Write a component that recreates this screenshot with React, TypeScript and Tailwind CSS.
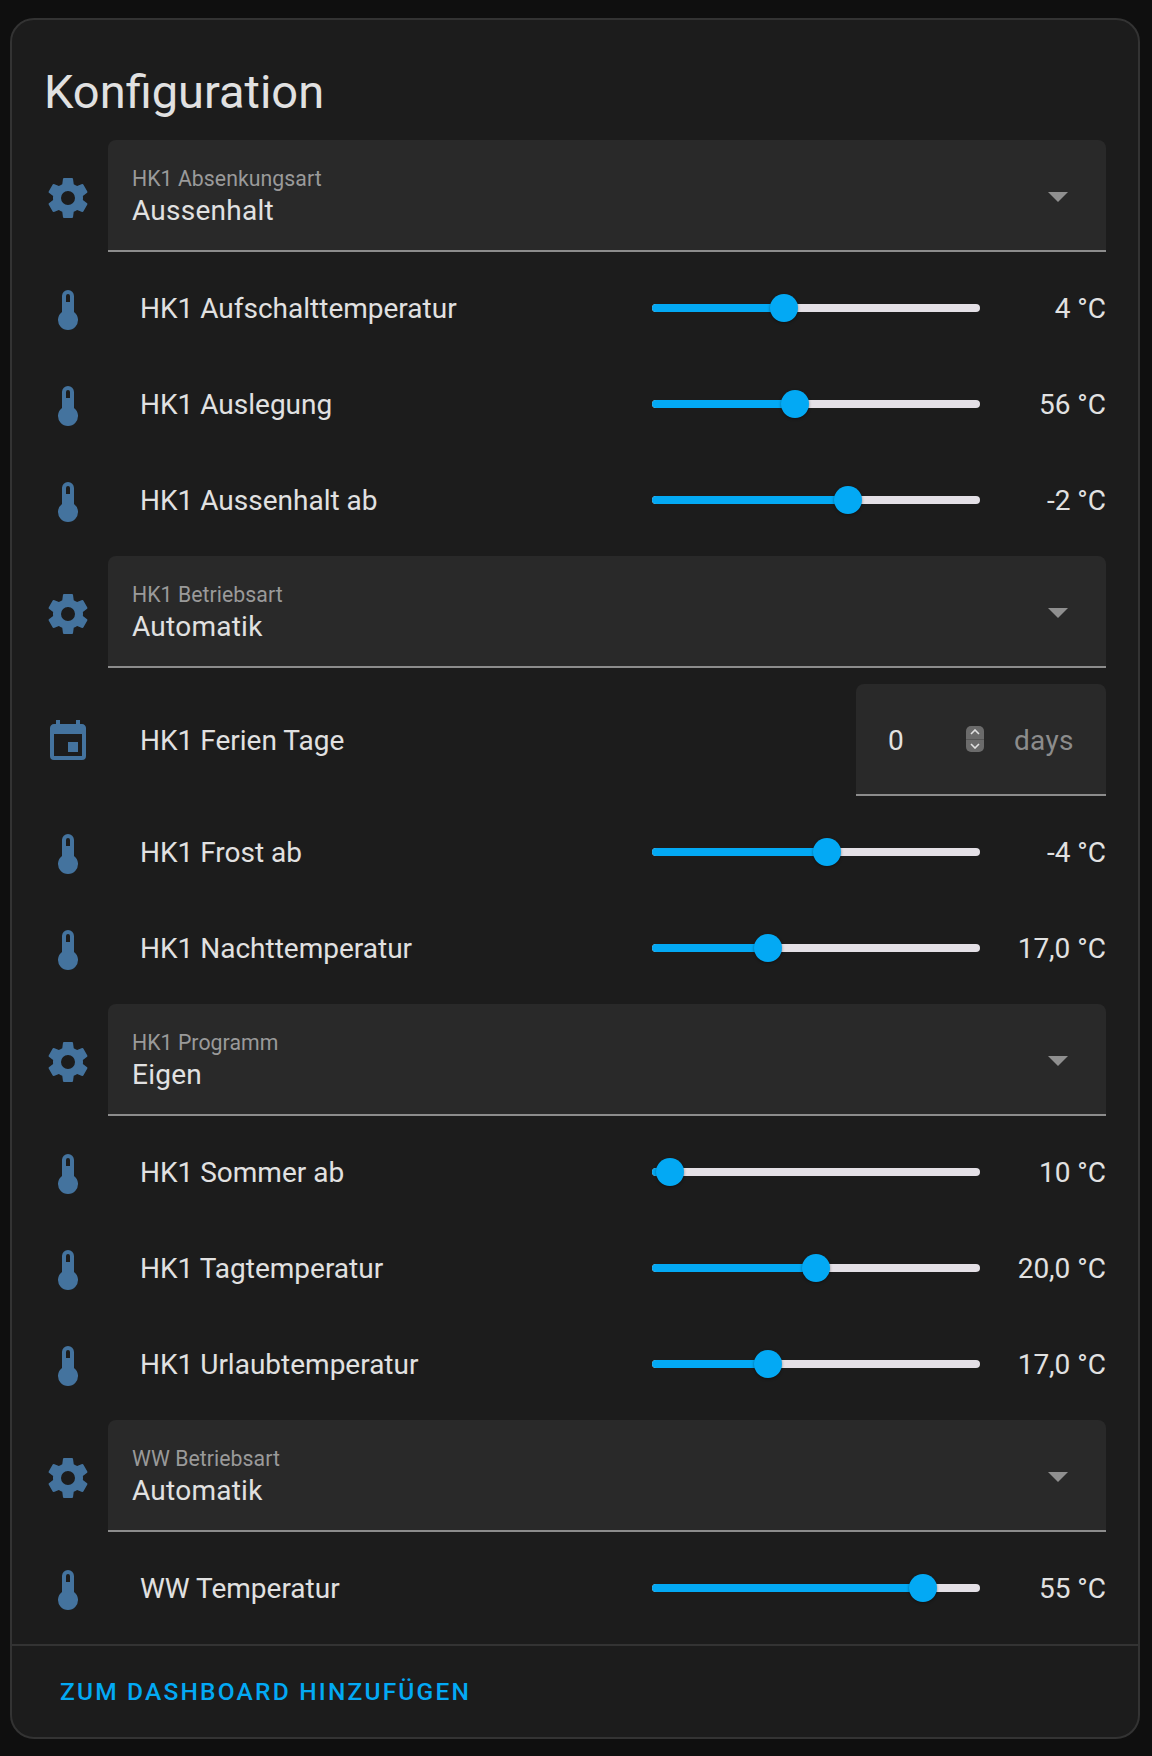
const cog =
  "M12,15.5A3.5,3.5 0 0,1 8.5,12A3.5,3.5 0 0,1 12,8.5A3.5,3.5 0 0,1 15.5,12A3.5,3.5 0 0,1 12,15.5M19.43,12.97C19.47,12.65 19.5,12.33 19.5,12C19.5,11.67 19.47,11.34 19.43,11L21.54,9.37C21.73,9.22 21.78,8.95 21.66,8.73L19.66,5.27C19.54,5.05 19.27,4.96 19.05,5.05L16.56,6.05C16.04,5.66 15.5,5.32 14.87,5.07L14.5,2.42C14.46,2.18 14.25,2 14,2H10C9.75,2 9.54,2.18 9.5,2.42L9.13,5.07C8.5,5.32 7.96,5.66 7.44,6.05L4.95,5.05C4.73,4.96 4.46,5.05 4.34,5.27L2.34,8.73C2.21,8.95 2.27,9.22 2.46,9.37L4.57,11C4.53,11.34 4.5,11.67 4.5,12C4.5,12.33 4.53,12.65 4.57,12.97L2.46,14.63C2.27,14.78 2.21,15.05 2.34,15.27L4.34,18.73C4.46,18.95 4.73,19.03 4.95,18.95L7.44,17.94C7.96,18.34 8.5,18.68 9.13,18.93L9.5,21.58C9.54,21.82 9.75,22 10,22H14C14.25,22 14.46,21.82 14.5,21.58L14.87,18.93C15.5,18.67 16.04,18.34 16.56,17.94L19.05,18.95C19.27,19.03 19.54,18.95 19.66,18.73L21.66,15.27C21.78,15.05 21.73,14.78 21.54,14.63L19.43,12.97Z";
const thermometer = "M15 13V5A3 3 0 0 0 9 5V13A5 5 0 1 0 15 13M12 4A1 1 0 0 1 13 5V8H11V5A1 1 0 0 1 12 4Z";
const calendar =
  "M19,19H5V8H19M16,1V3H8V1H6V3H5C3.89,3 3,3.89 3,5V19A2,2 0 0,0 5,21H19A2,2 0 0,0 21,19V5C21,3.89 20.1,3 19,3H18V1M17,12H12V17H17V12Z";

function RowIcon({ d }: { d: string }) {
  return (
    <svg viewBox="0 0 24 24" className="mt-1 h-12 w-12 shrink-0 fill-[#44739e]">
      <path d={d} />
    </svg>
  );
}

function SelectRow({ label, value }: { label: string; value: string }) {
  return (
    <div className="my-2 flex items-center gap-4">
      <RowIcon d={cog} />
      <div className="relative flex h-[112px] flex-1 flex-col rounded-t-lg border-b-2 border-[#8c8c8c] bg-[#292929] pl-6 pt-[25px]">
        <span className="text-[21.25px] leading-[28px] tracking-[0.05px] text-[#9a9a9a]">{label}</span>
        <span className="text-[28px] leading-[35px] tracking-[0.25px] text-[#e1e1e1]">{value}</span>
        <span className="absolute right-[38px] top-[52px] h-0 w-0 border-x-[10px] border-t-[10px] border-x-transparent border-t-[#8f8f8f]" />
      </div>
    </div>
  );
}

function SliderRow({ label, value, pos }: { label: string; value: string; pos: number }) {
  return (
    <div className="flex h-24 items-center gap-4">
      <RowIcon d={thermometer} />
      <span className="mt-0.5 w-[528px] shrink-0 pl-[32px] text-[28px] text-[#e1e1e1]">{label}</span>
      <div className="relative h-2 w-[328px] shrink-0 rounded bg-[#e4e0e6]">
        <div className="h-2 rounded-l bg-[#03a9f4]" style={{ width: pos }} />
        <div
          className="absolute top-[-10px] ml-[-14px] h-7 w-7 rounded-full bg-[#03a9f4] shadow-[0_1px_3px_rgba(0,0,0,0.4)]"
          style={{ left: pos }}
        />
      </div>
      <span className="mt-0.5 flex-1 text-right text-[28px] text-[#e1e1e1]">{value}</span>
    </div>
  );
}

function NumberRow() {
  return (
    <div className="mb-2 mt-4 flex items-center gap-4">
      <RowIcon d={calendar} />
      <span className="mt-0.5 flex-1 pl-[32px] text-[28px] text-[#e1e1e1]">HK1 Ferien Tage</span>
      <div className="flex h-[112px] w-[250px] items-center rounded-t-lg border-b-2 border-[#8c8c8c] bg-[#292929] pl-8">
        <span className="mt-1 w-[78px] text-[28px] text-[#e1e1e1]">0</span>
        <span className="flex h-[26px] w-[18px] flex-col items-center justify-between rounded-[5px] bg-[#6b6b6b] py-[3px]">
          <svg viewBox="0 0 10 6" className="h-[6px] w-[10px] fill-none stroke-[#e1e1e1] stroke-[1.6]">
            <path d="M1 5L5 1L9 5" />
          </svg>
          <span className="h-px w-full bg-[#565656]" />
          <svg viewBox="0 0 10 6" className="h-[6px] w-[10px] fill-none stroke-[#e1e1e1] stroke-[1.6]">
            <path d="M1 1L5 5L9 1" />
          </svg>
        </span>
        <span className="ml-[30px] mt-1 text-[28px] tracking-[0.3px] text-[#8c8c8c]">days</span>
      </div>
    </div>
  );
}

export default function App() {
  return (
    <div className="h-[1756px] bg-[#0f0f0f] px-[10px] pt-[18px] font-['Roboto',sans-serif]">
      <div className="h-[1721px] w-[1130px] rounded-3xl border-2 border-[#333333] bg-[#1c1c1c]">
        <div className="flex h-[112px] items-center px-8 pt-[32px] text-[47px] text-[#e1e1e1]">Konfiguration</div>
        <div className="border-b-2 border-[#333333] pb-2 pl-8 pr-8">
          <SelectRow label="HK1 Absenkungsart" value="Aussenhalt" />
          <SliderRow label="HK1 Aufschalttemperatur" value="4 °C" pos={132} />
          <SliderRow label="HK1 Auslegung" value="56 °C" pos={143} />
          <SliderRow label="HK1 Aussenhalt ab" value="-2 °C" pos={195.5} />
          <SelectRow label="HK1 Betriebsart" value="Automatik" />
          <NumberRow />
          <SliderRow label="HK1 Frost ab" value="-4 °C" pos={175} />
          <SliderRow label="HK1 Nachttemperatur" value="17,0 °C" pos={116} />
          <SelectRow label="HK1 Programm" value="Eigen" />
          <SliderRow label="HK1 Sommer ab" value="10 °C" pos={18} />
          <SliderRow label="HK1 Tagtemperatur" value="20,0 °C" pos={164} />
          <SliderRow label="HK1 Urlaubtemperatur" value="17,0 °C" pos={116} />
          <SelectRow label="WW Betriebsart" value="Automatik" />
          <SliderRow label="WW Temperatur" value="55 °C" pos={270.5} />
        </div>
        <div className="flex h-[91px] items-center pl-12 pt-[2px] text-[24.5px] font-medium tracking-[2.2px] text-[#03a9f4]">
          ZUM DASHBOARD HINZUFÜGEN
        </div>
      </div>
    </div>
  );
}
